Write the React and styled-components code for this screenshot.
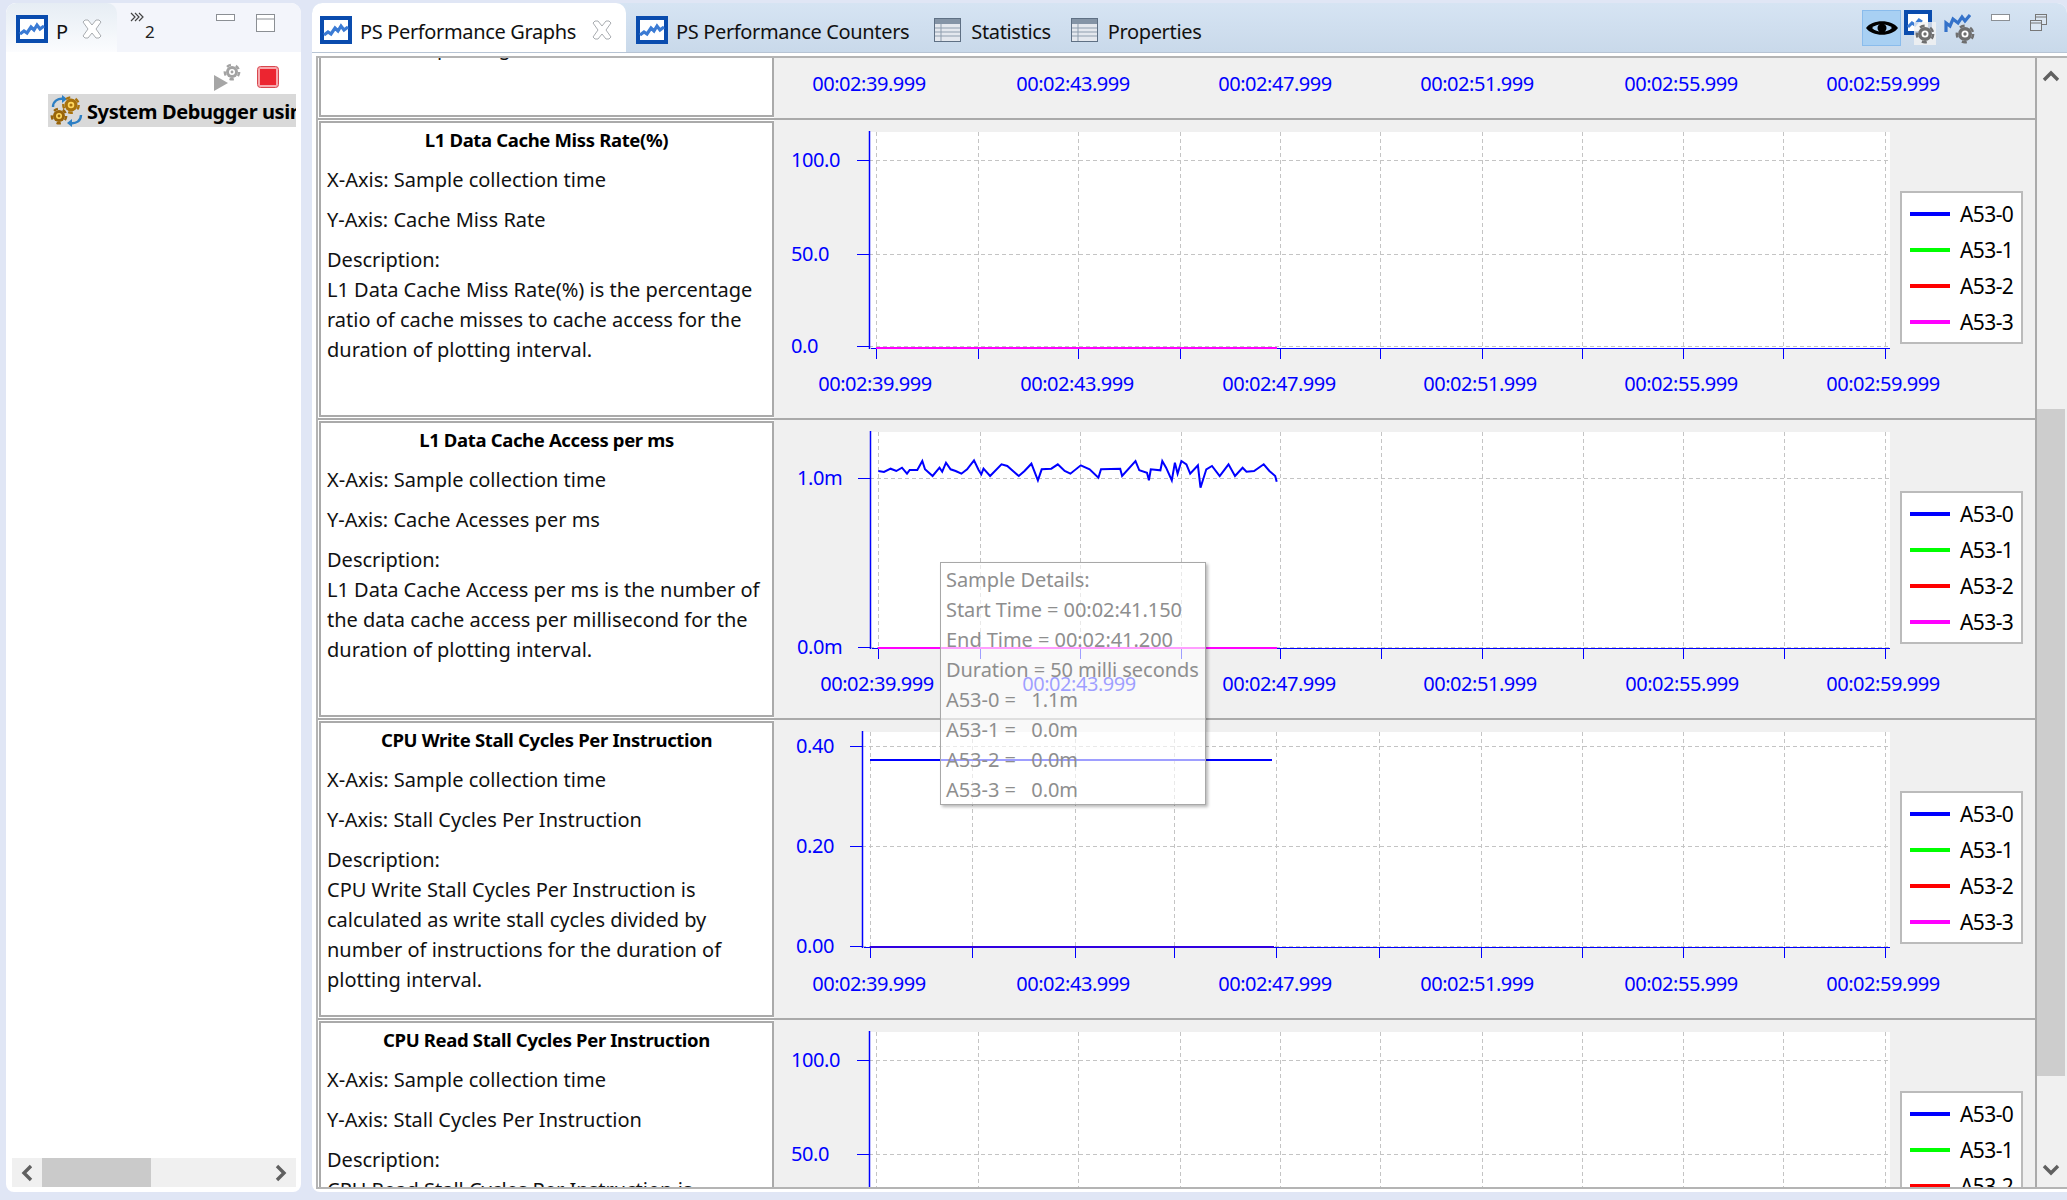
import React from 'react'
import styled, { createGlobalStyle } from 'styled-components'

const FONT = `"Noto Sans", "Open Sans", sans-serif`

const Global = createGlobalStyle`
  html, body { margin: 0; padding: 0; background: #e0e6f5; }
  body { width: 2067px; height: 1200px; overflow: hidden; font-family: ${FONT}; }
  * { box-sizing: border-box; }
`

const Page = styled.div`
  width: 2067px;
  height: 1200px;
  display: flex;
  gap: 11px;
  padding: 3px 0 8px 6px;
  background: #e0e6f5;
`

/* ---------- left view ---------- */

const LeftPanel = styled.aside`
  width: 295px;
  display: flex;
  flex-direction: column;
  background: #fff;
  border-radius: 10px 10px 8px 8px;
  overflow: hidden;
`
const LeftHeader = styled.div`
  height: 49px;
  display: flex;
  background: #f3f5fb;
`
const LeftTab = styled.div`
  width: 111px;
  display: flex;
  align-items: center;
  padding: 3px 0 0 10px;
  background: linear-gradient(#e6edf4, #fbfcfe);
  border-radius: 10px 10px 0 0;
`
const TabLabel = styled.span`
  margin-left: ${p => p.$gap || 8}px;
  padding-top: 4px;
  font-size: 20px;
  letter-spacing: -0.35px;
  color: #111;
  white-space: nowrap;
`
const More = styled.div`
  position: relative;
  width: 40px;
  margin-left: 12px;
  padding: 18px 0 0 16px;
  font-size: 17px;
  line-height: 22px;
  color: #222;
`
const MoreGlyph = styled.svg`
  position: absolute;
  left: 1px;
  top: 9px;
`
const WindowButtons = styled.div`
  margin-left: ${p => p.$left || 'auto'};
  align-self: flex-start;
  display: flex;
  align-items: flex-start;
  gap: ${p => p.$gap}px;
  padding: 11px ${p => p.$right}px 0 0;
`
const LeftToolbar = styled.div`
  height: 42px;
  display: flex;
  justify-content: flex-end;
  align-items: center;
  gap: 16px;
  padding: 8px 22px 0 0;
`
const TreeRow = styled.div`
  margin-left: 42px;
  width: 248px;
  height: 33px;
  display: flex;
  align-items: center;
  gap: 3px;
  padding-left: 2px;
  overflow: hidden;
  background: #d9d9d9;
  font-size: 20px;
  font-weight: 700;
  letter-spacing: -0.4px;
  white-space: nowrap;
  color: #000;
`
const TreeLabel = styled.span`
  padding-top: 2px;
`
const HScroll = styled.div`
  margin: auto 5px 5px 6px;
  height: 29px;
  display: flex;
  align-items: center;
  justify-content: space-between;
  position: relative;
  padding: 0 9px;
  background: #f0f0f0;
`
const HThumb = styled.div`
  position: absolute;
  left: 30px;
  top: 0;
  width: 109px;
  height: 100%;
  background: #cacaca;
`

/* ---------- main view ---------- */

const MainPanel = styled.main`
  flex: 1;
  min-width: 0;
  display: flex;
  flex-direction: column;
  background: #fff;
  border-radius: 10px 10px 0 8px;
  overflow: hidden;
`
const TabStrip = styled.div`
  height: 50px;
  display: flex;
  align-items: center;
  padding-right: 19px;
  background: linear-gradient(#d6e4f3, #c9d9ea);
  border-bottom: 1px solid #b7c4d4;
`
const ActiveTab = styled.div`
  width: 314px;
  height: 49px;
  display: flex;
  align-items: center;
  padding: 4px 0 0 8px;
  background: #fff;
  border-radius: 10px 10px 0 0;
`
const Tab = styled.div`
  display: flex;
  align-items: center;
  margin-left: ${p => p.$left}px;
  padding-top: 4px;
`
const CloseWrap = styled.span`
  margin-left: ${p => p.$left}px;
  display: flex;
`
const EyeButton = styled.div`
  margin-left: auto;
  width: 39px;
  height: 36px;
  display: flex;
  align-items: center;
  justify-content: center;
  background: #a8d0f3;
  border: 1px solid #8abcec;
`
const ToolGroup = styled.div`
  display: flex;
  align-items: center;
  gap: 7px;
  margin-left: 3px;
`
const Viewport = styled.div`
  flex: 1;
  min-height: 0;
  margin: 3px 0 3px 4px;
  display: flex;
  border-top: 2px solid #b4b4b4;
  border-left: 2px solid #b4b4b4;
  border-bottom: 2px solid #b4b4b4;
  overflow: hidden;
`
const Rows = styled.div`
  position: relative;
  width: 1719px;
  overflow: hidden;
`
const Row = styled.section`
  height: ${p => p.$height}px;
  display: flex;
  padding-left: 1px;
  border-bottom: 2px solid #aaa;
  flex-shrink: 0;
`
const TextBox = styled.div`
  width: 455px;
  flex-shrink: 0;
  margin: ${p => (p.$cut ? '0 0 1px' : '1px 0')};
  padding: ${p => (p.$cut ? '0 6px' : '2px 6px')};
  background: #fff;
  border: 2px solid #aaa;
  border-top-width: ${p => (p.$cut ? 0 : 2)}px;
  overflow: hidden;
  color: #111;
  font-size: 20px;
  line-height: 30px;
`
const Title = styled.div`
  margin-bottom: 10px;
  text-align: center;
  font-size: 18.5px;
  font-weight: 700;
  letter-spacing: -0.35px;
  color: #000;
`
const Para = styled.p`
  margin: 0 0 10px;
  white-space: nowrap;
`
const CutLine = styled.p`
  margin: -25px 0 0;
  white-space: nowrap;
`
const ChartArea = styled.div`
  flex: 1;
  min-width: 0;
  display: flex;
  align-items: flex-start;
  background: #f0f0f0;
  border-right: 2px solid #aaa;
`
const ChartSvg = styled.svg`
  display: block;
  flex-shrink: 0;
  margin-top: 1px;
  overflow: visible;
`
const AxisText = styled.text`
  font-family: ${FONT};
  font-size: 20px;
  letter-spacing: -0.45px;
  fill: #0000ff;
`
const Legend = styled.div`
  margin: 71px 0 0 6px;
  width: 123px;
  height: 153px;
  flex-shrink: 0;
  display: flex;
  flex-direction: column;
  padding: 3px 0 0 8px;
  background: #fff;
  border: 2px solid #bbb;
`
const LegendItem = styled.div`
  height: 36px;
  display: flex;
  align-items: center;
  gap: 10px;
  font-size: 21px;
  letter-spacing: -0.6px;
  color: #000;
`
const Swatch = styled.span`
  width: 40px;
  height: 4px;
  background: ${p => p.$color};
`
const Tooltip = styled.div`
  position: absolute;
  left: 622px;
  top: 504px;
  width: 266px;
  height: 243px;
  padding: 2px 0 0 5px;
  background: rgba(255, 255, 255, 0.62);
  border: 1px solid #a8a8a8;
  box-shadow: 2px 2px 3px rgba(0, 0, 0, 0.28);
  color: #8e8e8e;
  font-size: 20px;
  line-height: 30px;
  letter-spacing: -0.05px;
  white-space: pre;
`
const VScroll = styled.div`
  width: 30px;
  flex-shrink: 0;
  display: flex;
  flex-direction: column;
  background: #f0f0f0;
`
const VArrow = styled.div`
  height: 36px;
  display: flex;
  align-items: center;
  justify-content: center;
  padding-right: 2px;
  margin-top: ${p => (p.$end ? 'auto' : 0)};
`
const VThumb = styled.div`
  margin: 315px 2px 0 0;
  height: 667px;
  background: #cdcdcd;
`

/* ---------- icons ---------- */

const ChartIcon = () => (
  <svg width="32" height="28" viewBox="0 0 32 28">
    <rect x="2" y="2" width="28" height="24" fill="#fff" stroke="#0a4cae" strokeWidth="4" />
    <path d="M4 19l4-3 3 2 4-6 3 3 3-5 3 4 4-3" fill="none" stroke="#3b7bd4" strokeWidth="3.2" />
  </svg>
)

const CloseIcon = () => (
  <svg width="20" height="20" viewBox="0 0 20 20">
    <path
      d="M3 1h3l4 5 4-5h3l2 2-5 7 5 7-2 2h-3l-4-5-4 5H3l-2-2 5-7-5-7z"
      fill="#fff"
      stroke="#a8acb0"
      strokeWidth="1"
    />
  </svg>
)

const MinIcon = () => (
  <svg width="20" height="8" viewBox="0 0 20 8">
    <rect x="0.5" y="0.5" width="18" height="6" fill="#fff" stroke="#8b8f94" />
  </svg>
)

const MaxIcon = () => (
  <svg width="20" height="19" viewBox="0 0 20 19">
    <rect x="0.5" y="0.5" width="18" height="17" fill="#fff" stroke="#8b8f94" />
    <path d="M1 5h17" stroke="#8b8f94" />
  </svg>
)

const RestoreIcon = () => (
  <svg width="18" height="17" viewBox="0 0 18 17">
    <rect x="5.5" y="0.5" width="11" height="10" fill="#dbe6f2" stroke="#777" />
    <path d="M6 3h10" stroke="#777" />
    <rect x="0.5" y="6.5" width="11" height="10" fill="#dbe6f2" stroke="#777" />
    <path d="M1 9h10" stroke="#777" />
  </svg>
)

const TableIcon = () => (
  <svg width="27" height="24" viewBox="0 0 27 24">
    <rect x="0.5" y="0.5" width="26" height="23" fill="#e4e8ee" stroke="#5f7084" />
    <rect x="1" y="1" width="25" height="5" fill="#8494a6" />
    <path d="M1 10h25M1 14h25M1 18h25" stroke="#8f9eae" />
    <path d="M7 6v17" stroke="#8f9eae" />
  </svg>
)

const Gear = ({ x, y, r, color = '#6f6f6f', hub = '#fff' }) => (
  <g>
    <circle cx={x} cy={y} r={r} fill={color} />
    <circle
      cx={x}
      cy={y}
      r={r + 1.2}
      fill="none"
      stroke={color}
      strokeWidth="2.4"
      strokeDasharray={`${(r * 0.72).toFixed(2)} ${(r * 0.85).toFixed(2)}`}
    />
    <circle cx={x} cy={y} r={r * 0.5} fill={hub} />
    <circle cx={x} cy={y} r={r * 0.24} fill={color} />
  </g>
)

const ChartGearIcon = () => (
  <svg width="33" height="36" viewBox="0 0 33 36">
    <rect x="2" y="2" width="24" height="21" fill="#fff" stroke="#0a4cae" strokeWidth="4" />
    <path d="M4 17l4-4 3 2 4-5 3 2" fill="none" stroke="#3b7bd4" strokeWidth="3" />
    <rect x="10" y="12" width="22" height="23" fill="#f2f2f2" opacity="0.8" />
    <Gear x={21} y={24} r={7} />
  </svg>
)

const LineGearIcon = () => (
  <svg width="33" height="36" viewBox="0 0 33 36">
    <path d="M2 22v-9l4 3 3-7 5 4 4-6 3 4 5-6" fill="none" stroke="#3472ca" strokeWidth="3.2" />
    <Gear x={21} y={24} r={7} />
  </svg>
)

const RunGearIcon = () => (
  <svg width="27" height="28" viewBox="0 0 27 28">
    <path d="M0 12l14 8-14 8z" fill="#a6a6a6" />
    <Gear x={18} y={9} r={6} color="#a3a3a3" />
  </svg>
)

const StopIcon = () => (
  <svg width="22" height="22" viewBox="0 0 22 22">
    <rect x="0.5" y="0.5" width="21" height="21" rx="3" fill="#f7a8ad" stroke="#d8474e" />
    <rect x="3" y="3" width="16" height="16" fill="#ec2530" />
  </svg>
)

const DebugIcon = () => (
  <svg width="34" height="32" viewBox="0 0 34 32" style={{ flexShrink: 0 }}>
    <path d="M3 12c0-6 5-9 11-8" fill="none" stroke="#2d7fc4" strokeWidth="2.4" />
    <path d="M12 0l5 4-5 4z" fill="#2d7fc4" />
    <path d="M31 20c0 6-5 9-11 8" fill="none" stroke="#2d7fc4" strokeWidth="2.4" />
    <path d="M22 24l-5 4 5 4z" fill="#2d7fc4" />
    <Gear x={21} y={10} r={6.5} color="#a8720c" hub="#ffd75e" />
    <Gear x={9} y={21} r={6} color="#98640a" hub="#ffd75e" />
  </svg>
)

const EyeIcon = () => (
  <svg width="34" height="22" viewBox="0 0 34 22">
    <path d="M1 11C7 2 27 2 33 11 27 20 7 20 1 11z" fill="#000" />
    <path d="M7 11c5-5 15-5 20 0-5 5-15 5-20 0z" fill="#a8d0f3" />
    <circle cx="17" cy="11" r="4.5" fill="#000" />
  </svg>
)

const Chevron = ({ dir }) => {
  const paths = {
    up: 'M2 10l7-7 7 7',
    down: 'M2 3l7 7 7-7',
    left: 'M10 2l-7 7 7 7',
    right: 'M3 2l7 7-7 7',
  }
  const vertical = dir === 'up' || dir === 'down'
  return (
    <svg width={vertical ? 18 : 13} height={vertical ? 13 : 18} viewBox={vertical ? '0 0 18 13' : '0 0 13 18'}>
      <path d={paths[dir]} fill="none" stroke="#606060" strokeWidth="3.4" />
    </svg>
  )
}

/* ---------- chart data ---------- */

const ORIGIN = 774
const SVG_W = 1120
const toX = x => x - ORIGIN

// trace of the A53-0 line on the cache access chart, page x / y inside the row
const TRACE = [
  [283, 150], [298, 153], [315, 143], [330, 150], [345, 140], [358, 158], [365, 147], [385, 147],
  [398, 120], [405, 145], [425, 165], [443, 140], [450, 152], [460, 125], [472, 145], [485, 150],
  [500, 158], [515, 145], [533, 118], [545, 147], [552, 160], [558, 143], [575, 165], [605, 130],
  [620, 135], [635, 150], [650, 165], [665, 150], [683, 128], [700, 178], [710, 145], [735, 143],
  [752, 130], [770, 150], [785, 158], [812, 133], [835, 145], [858, 170], [865, 145], [915, 143],
  [920, 165], [955, 120], [965, 148], [985, 155], [990, 178], [995, 145], [1020, 148], [1025, 120],
  [1035, 140], [1050, 178], [1058, 125], [1065, 158], [1075, 120], [1088, 130], [1098, 158],
  [1118, 133], [1125, 200], [1140, 145], [1155, 135], [1175, 165], [1198, 130], [1215, 165],
  [1235, 140], [1245, 152], [1265, 150], [1290, 130], [1305, 150], [1320, 165], [1324, 182],
]
  .map(([x, y]) => `${(770 + x / 2.613 - ORIGIN).toFixed(1)},${(y / 3).toFixed(1)}`)
  .join(' ')

const charts = [
  {
    title: 'L1 Data Cache Miss Rate(%)',
    lines: ['X-Axis: Sample collection time', 'Y-Axis: Cache Miss Rate'],
    desc: ['L1 Data Cache Miss Rate(%) is the percentage', 'ratio of cache misses to cache access for the', 'duration of plotting interval.'],
    axisX: 869,
    axisY: 227,
    yLabelX: 791,
    yTicks: [['100.0', 39], ['50.0', 133], ['0.0', 225]],
    grid: [876, 978, 1078, 1180, 1280, 1380, 1482, 1582, 1683, 1783, 1885],
    xLabels: [875, 1077, 1279, 1480, 1681, 1883],
    flat: { from: 876, to: 1277, color: '#ff00ff' },
  },
  {
    title: 'L1 Data Cache Access per ms',
    lines: ['X-Axis: Sample collection time', 'Y-Axis: Cache Acesses per ms'],
    desc: ['L1 Data Cache Access per ms is the number of', 'the data cache access per millisecond for the', 'duration of plotting interval.'],
    axisX: 870,
    axisY: 227,
    yLabelX: 797,
    yTicks: [['1.0m', 57], ['0.0m', 226]],
    grid: [878, 980, 1080, 1181, 1280, 1381, 1482, 1583, 1683, 1784, 1885],
    xLabels: [877, 1079, 1279, 1480, 1682, 1883],
    flat: { from: 878, to: 1277, color: '#ff00ff' },
    trace: TRACE,
  },
  {
    title: 'CPU Write Stall Cycles Per Instruction',
    lines: ['X-Axis: Sample collection time', 'Y-Axis: Stall Cycles Per Instruction'],
    desc: ['CPU Write Stall Cycles Per Instruction is', 'calculated as write stall cycles divided by', 'number of instructions for the duration of', 'plotting interval.'],
    axisX: 862,
    axisY: 226,
    yLabelX: 796,
    yTicks: [['0.40', 25], ['0.20', 125], ['0.00', 225]],
    grid: [870, 972, 1075, 1174, 1276, 1379, 1481, 1582, 1683, 1784, 1885],
    xLabels: [869, 1073, 1275, 1477, 1681, 1883],
    flat: { from: 870, to: 1274, color: '#3000e0' },
    level: { from: 870, to: 1272, y: 39 },
  },
  {
    title: 'CPU Read Stall Cycles Per Instruction',
    lines: ['X-Axis: Sample collection time', 'Y-Axis: Stall Cycles Per Instruction'],
    desc: ['CPU Read Stall Cycles Per Instruction is'],
    axisX: 869,
    axisY: 227,
    yLabelX: 791,
    yTicks: [['100.0', 39], ['50.0', 133], ['0.0', 225]],
    grid: [876, 978, 1078, 1180, 1280, 1380, 1482, 1582, 1683, 1783, 1885],
    xLabels: [875, 1077, 1279, 1480, 1681, 1883],
  },
]

const TIMES = ['00:02:39.999', '00:02:43.999', '00:02:47.999', '00:02:51.999', '00:02:55.999', '00:02:59.999']

const legend = [
  ['A53-0', '#0000ff'],
  ['A53-1', '#00ff00'],
  ['A53-2', '#ff0000'],
  ['A53-3', '#ff00ff'],
]

const tooltipText = [
  'Sample Details:',
  'Start Time = 00:02:41.150',
  'End Time = 00:02:41.200',
  'Duration = 50 milli seconds',
  'A53-0 =   1.1m',
  'A53-1 =   0.0m',
  'A53-2 =   0.0m',
  'A53-3 =   0.0m',
].join('\n')

const LABEL_Y = 263

function Chart({ c }) {
  const ax = toX(c.axisX)
  return (
    <ChartSvg width={SVG_W} height={295} viewBox={`0 0 ${SVG_W} 295`}>
      <rect x={ax} y="11" width={toX(1890) - ax} height={c.axisY - 11} fill="#fff" />
      {c.yTicks.map(([, y]) => (
        <line key={y} x1={ax} x2={toX(1890)} y1={y + 0.5} y2={y + 0.5} stroke="#c4c4c4" strokeDasharray="4 3" />
      ))}
      {c.grid.map(x => (
        <line key={x} x1={toX(x) + 0.5} x2={toX(x) + 0.5} y1="11" y2={c.axisY} stroke="#c4c4c4" strokeDasharray="4 3" />
      ))}
      <line x1={ax + 0.5} x2={ax + 0.5} y1="10" y2={c.axisY + 1} stroke="#0000ff" strokeWidth="1.5" />
      <line x1={ax + 2} x2={toX(1890)} y1={c.axisY + 0.5} y2={c.axisY + 0.5} stroke="#0000ff" />
      {c.yTicks.map(([, y]) => (
        <line key={y} x1={ax - 12} x2={ax} y1={y + 0.5} y2={y + 0.5} stroke="#0000ff" />
      ))}
      {c.grid.map(x => (
        <line key={x} x1={toX(x) + 0.5} x2={toX(x) + 0.5} y1={c.axisY} y2={c.axisY + 11} stroke="#0000ff" />
      ))}
      {c.flat && (
        <line x1={toX(c.flat.from)} x2={toX(c.flat.to)} y1={c.axisY} y2={c.axisY} stroke={c.flat.color} strokeWidth="2" />
      )}
      {c.level && (
        <line x1={toX(c.level.from)} x2={toX(c.level.to)} y1={c.level.y} y2={c.level.y} stroke="#0000ff" strokeWidth="2" />
      )}
      {c.trace && <polyline points={c.trace} fill="none" stroke="#0000ff" strokeWidth="2" />}
      {c.yTicks.map(([t, y]) => (
        <AxisText key={t} x={toX(c.yLabelX)} y={y + 7}>
          {t}
        </AxisText>
      ))}
      {c.xLabels.map((x, i) => (
        <AxisText key={x} x={toX(x)} y={LABEL_Y + 7} textAnchor="middle">
          {TIMES[i]}
        </AxisText>
      ))}
    </ChartSvg>
  )
}

function LegendBox() {
  return (
    <Legend>
      {legend.map(([name, color]) => (
        <LegendItem key={name}>
          <Swatch $color={color} />
          {name}
        </LegendItem>
      ))}
    </Legend>
  )
}

const TOP_LABELS = [869, 1073, 1275, 1477, 1681, 1883]

export default function App() {
  return (
    <Page>
      <Global />
      <LeftPanel>
        <LeftHeader>
          <LeftTab>
            <ChartIcon />
            <TabLabel>P</TabLabel>
            <CloseWrap $left={14}>
              <CloseIcon />
            </CloseWrap>
          </LeftTab>
          <More>
            <MoreGlyph width="16" height="10" viewBox="0 0 16 10">
              <path d="M1 1l4 4-4 4M5 1l4 4-4 4M9 1l4 4-4 4" fill="none" stroke="#444" strokeWidth="1.2" />
            </MoreGlyph>
            2
          </More>
          <WindowButtons $gap={20} $right={25}>
            <MinIcon />
            <MaxIcon />
          </WindowButtons>
        </LeftHeader>
        <LeftToolbar>
          <RunGearIcon />
          <StopIcon />
        </LeftToolbar>
        <TreeRow>
          <DebugIcon />
          <TreeLabel>System Debugger using</TreeLabel>
        </TreeRow>
        <HScroll>
          <HThumb />
          <Chevron dir="left" />
          <Chevron dir="right" />
        </HScroll>
      </LeftPanel>

      <MainPanel>
        <TabStrip>
          <ActiveTab>
            <ChartIcon />
            <TabLabel>PS Performance Graphs</TabLabel>
            <CloseWrap $left={16}>
              <CloseIcon />
            </CloseWrap>
          </ActiveTab>
          <Tab $left={10}>
            <ChartIcon />
            <TabLabel>PS Performance Counters</TabLabel>
          </Tab>
          <Tab $left={25}>
            <TableIcon />
            <TabLabel $gap={10}>Statistics</TabLabel>
          </Tab>
          <Tab $left={20}>
            <TableIcon />
            <TabLabel $gap={10}>Properties</TabLabel>
          </Tab>
          <EyeButton>
            <EyeIcon />
          </EyeButton>
          <ToolGroup>
            <ChartGearIcon />
            <LineGearIcon />
          </ToolGroup>
          <WindowButtons $left="14px" $gap={19} $right={0}>
            <MinIcon />
            <RestoreIcon />
          </WindowButtons>
        </TabStrip>

        <Viewport>
          <Rows>
            <Row $height={62}>
              <TextBox $cut>
                <CutLine>duration of plotting interval.</CutLine>
              </TextBox>
              <ChartArea>
                <ChartSvg width={SVG_W} height={59} viewBox={`0 0 ${SVG_W} 59`}>
                  {TOP_LABELS.map((x, i) => (
                    <AxisText key={x} x={toX(x)} y={32} textAnchor="middle">
                      {TIMES[i]}
                    </AxisText>
                  ))}
                </ChartSvg>
              </ChartArea>
            </Row>
            {charts.map(c => (
              <Row key={c.title} $height={300}>
                <TextBox>
                  <Title>{c.title}</Title>
                  {c.lines.map(l => (
                    <Para key={l}>{l}</Para>
                  ))}
                  <Para>
                    Description:
                    {c.desc.map(d => (
                      <React.Fragment key={d}>
                        <br />
                        {d}
                      </React.Fragment>
                    ))}
                  </Para>
                </TextBox>
                <ChartArea>
                  <Chart c={c} />
                  <LegendBox />
                </ChartArea>
              </Row>
            ))}
            <Tooltip>{tooltipText}</Tooltip>
          </Rows>
          <VScroll>
            <VArrow>
              <Chevron dir="up" />
            </VArrow>
            <VThumb />
            <VArrow $end>
              <Chevron dir="down" />
            </VArrow>
          </VScroll>
        </Viewport>
      </MainPanel>
    </Page>
  )
}
